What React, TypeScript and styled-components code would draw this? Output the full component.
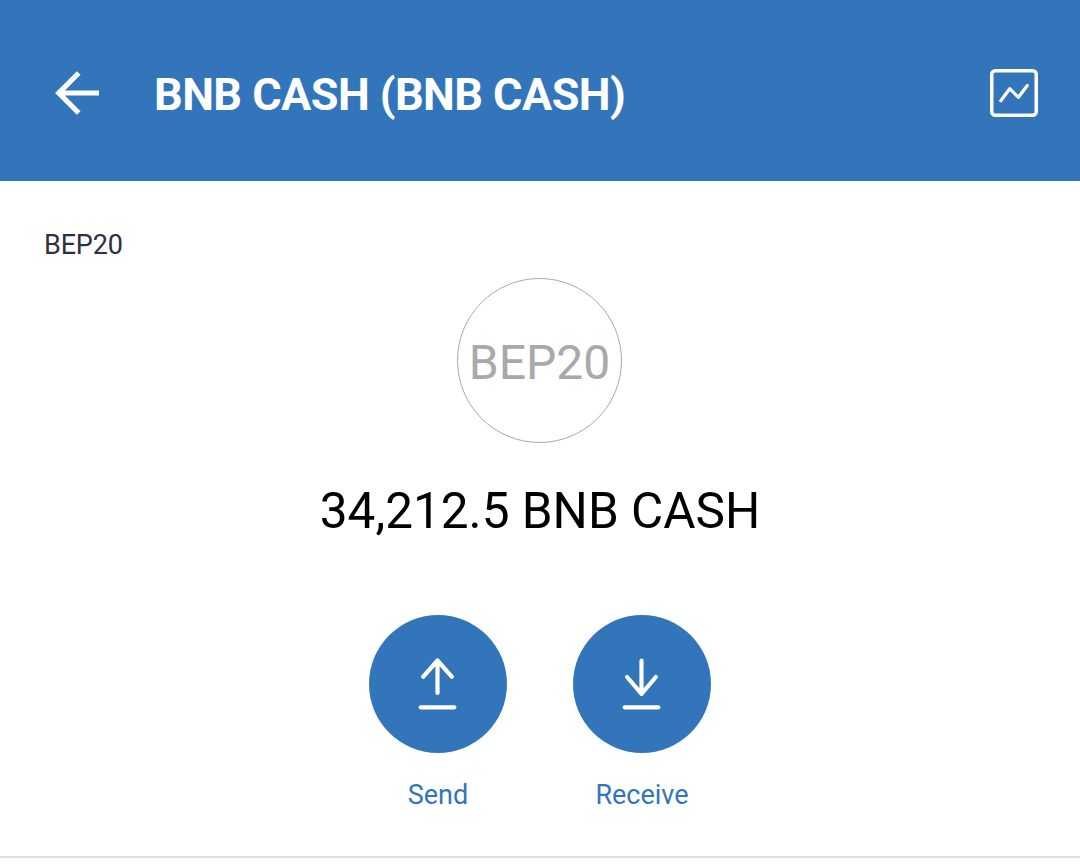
import styled, { createGlobalStyle } from 'styled-components';

const GlobalStyle = createGlobalStyle`
  * {
    box-sizing: border-box;
  }

  body {
    margin: 0;
    background: #ffffff;
    font-family: Roboto, 'Noto Sans', sans-serif;
  }
`;

const Screen = styled.div`
  width: 1080px;
  height: 865px;
  overflow: hidden;
  display: flex;
  flex-direction: column;
`;

const Header = styled.header`
  height: 181px;
  padding: 5px 42px 0 55px;
  display: flex;
  align-items: center;
  background: #3375bb;
  color: #ffffff;
`;

const IconButton = styled.button`
  display: flex;
  padding: 0;
  border: none;
  background: none;
  color: inherit;
  cursor: pointer;
`;

const Title = styled.h1`
  flex: 1;
  margin: 3px 0 0 55px;
  font-size: 45px;
  line-height: 54px;
  font-weight: 700;
  letter-spacing: -0.55px;
`;

const Content = styled.main`
  height: 677px;
  display: flex;
  flex-direction: column;
  align-items: center;
  border-bottom: 2px solid #dedede;
`;

const Network = styled.div`
  align-self: flex-start;
  margin: 48px 0 0 44px;
  font-size: 27px;
  line-height: 32px;
  letter-spacing: -0.15px;
  color: #2f3040;
`;

const TokenLogo = styled.div`
  width: 165px;
  height: 165px;
  margin: 17px 1px 0 0;
  padding-top: 3px;
  display: flex;
  align-items: center;
  justify-content: center;
  border: 1px solid #a9a9a9;
  border-radius: 50%;
  font-size: 48px;
  color: #a9a9a9;
`;

const Balance = styled.div`
  margin-top: 38px;
  font-size: 49.5px;
  line-height: 60px;
  color: #000000;
`;

const Actions = styled.div`
  margin-top: 74px;
  display: flex;
  gap: 66px;
`;

const Action = styled.button`
  width: 138px;
  padding: 0;
  display: flex;
  flex-direction: column;
  align-items: center;
  border: none;
  background: none;
  font-family: inherit;
  font-size: 27px;
  line-height: 32px;
  color: #3375bb;
  cursor: pointer;
`;

const ActionCircle = styled.span`
  width: 138px;
  height: 138px;
  margin-bottom: 26px;
  display: flex;
  align-items: center;
  justify-content: center;
  border-radius: 50%;
  background: #3375bb;
`;

const BackIcon = () => (
  <svg width="44" height="44" viewBox="0 0 44 44" fill="none" stroke="currentColor" strokeWidth="5.2">
    <path d="M44 22H4M23.7 2L3.8 22l19.9 20" />
  </svg>
);

const ChartIcon = () => (
  <svg
    width="48"
    height="48"
    viewBox="0 0 48 48"
    fill="none"
    stroke="currentColor"
    strokeWidth="3.5"
    strokeLinecap="round"
    strokeLinejoin="round"
  >
    <rect x="1.75" y="1.75" width="44.5" height="44.5" rx="3.5" />
    <path strokeWidth="3.2" d="M10.8 31.7l8.9-12 8.7 8.6 8.9-11.8" />
  </svg>
);

const ActionIcon = ({ path }: { path: string }) => (
  <svg
    width="138"
    height="138"
    viewBox="0 0 138 138"
    fill="none"
    stroke="#ffffff"
    strokeWidth="4.2"
    strokeLinecap="round"
    strokeLinejoin="round"
  >
    <path d={path} />
    <path d="M51.7 92.3h33.6" />
  </svg>
);

const actions = [
  { label: 'Send', path: 'M68.5 78V45.5M54.1 61.8l14.4-16.3 14.4 16.3' },
  { label: 'Receive', path: 'M68.5 45.7V78.8M54.1 62l14.4 16.8L82.9 62' },
];

const App = () => (
  <>
    <GlobalStyle />
    <Screen>
      <Header>
        <IconButton aria-label="Back">
          <BackIcon />
        </IconButton>
        <Title>BNB CASH (BNB CASH)</Title>
        <IconButton aria-label="Price chart">
          <ChartIcon />
        </IconButton>
      </Header>
      <Content>
        <Network>BEP20</Network>
        <TokenLogo>BEP20</TokenLogo>
        <Balance>34,212.5 BNB CASH</Balance>
        <Actions>
          {actions.map(({ label, path }) => (
            <Action key={label}>
              <ActionCircle>
                <ActionIcon path={path} />
              </ActionCircle>
              {label}
            </Action>
          ))}
        </Actions>
      </Content>
    </Screen>
  </>
);

export default App;
